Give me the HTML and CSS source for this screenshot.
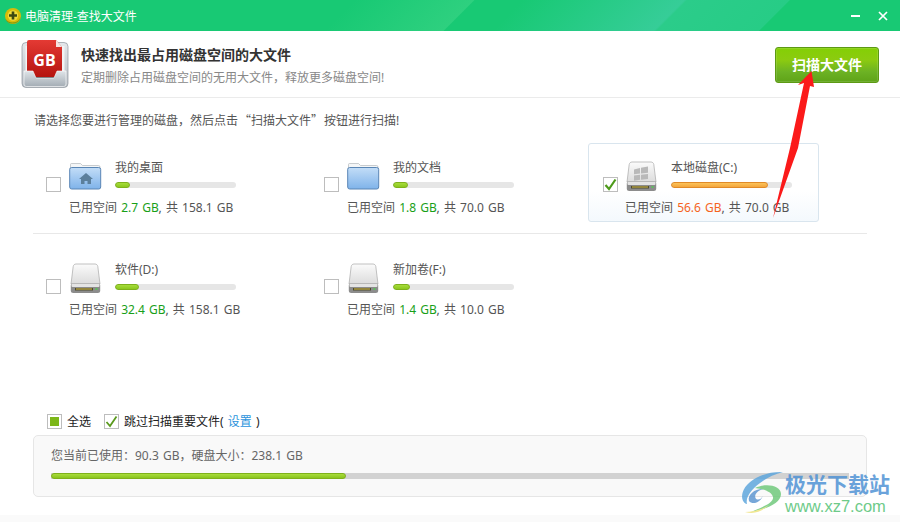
FILE: index.html
```html
<!DOCTYPE html>
<html lang="zh-CN">
<head>
<meta charset="utf-8">
<title>电脑清理-查找大文件</title>
<link rel="stylesheet" href="styles.css">
</head>
<body>
<div class="window">
  <header class="titlebar">
    <svg class="app-logo" viewBox="0 0 18 18" width="18" height="18"><circle cx="9" cy="9" r="8" fill="#d9bb08"/><path d="M1.500 11.500c2.500 5 12.500 6 15-1.500-.5 8-13.500 9-15 1.500z" fill="#7a9a12"/><circle cx="9" cy="8.500" r="5.200" fill="#f0dc3a"/><path d="M7.700 4.500h2.600v2.700H13v2.600h-2.700v2.700H7.700V9.800H5V7.200h2.700z" fill="#3d4a12"/></svg>
    <span class="title-text">电脑清理-查找大文件</span>
    <span class="win-controls">
      <svg width="10" height="10" viewBox="0 0 10 10"><rect x="0" y="4" width="9" height="2" fill="#fff"/></svg>
      <svg width="10" height="10" viewBox="0 0 10 10"><path d="M1 1l8 8M9 1L1 9" stroke="#fff" stroke-width="1.700"/></svg>
    </span>
  </header>

  <section class="head">
    <svg class="gb-icon" width="48" height="48" viewBox="0 0 48 48">
      <defs>
        <linearGradient id="tray" x1="0" y1="0" x2="0" y2="1"><stop offset="0" stop-color="#e4e7ea"/><stop offset="1" stop-color="#b5bcc3"/></linearGradient>
        <linearGradient id="front" x1="0" y1="0" x2="0" y2="1"><stop offset="0" stop-color="#dfe4e8"/><stop offset="1" stop-color="#a4adb5"/></linearGradient>
        <linearGradient id="red" x1="0" y1="0" x2="0" y2="1"><stop offset="0" stop-color="#e43a34"/><stop offset="1" stop-color="#b5140f"/></linearGradient>
      </defs>
      <rect x="1" y="2.500" width="46" height="45" rx="4" fill="url(#tray)" stroke="#8f969d" stroke-width=".7"/>
      <rect x="4.500" y="6" width="39" height="27" fill="#f1f3f4"/>
      <rect x="11" y="30" width="26" height="9" fill="#4a4f54"/>
      <path d="M8 0h27l6 7v30H6V2a2 2 0 0 1 2-2z" fill="url(#red)"/>
      <path d="M35 0v7h6z" fill="#f5e4e2"/>
      <text x="23.500" y="26" class="gb-text" text-anchor="middle">GB</text>
      <path d="M3 31h9l3 7h18l3-7h9v13a2.500 2.500 0 0 1-2.500 2.500h-37A2.500 2.500 0 0 1 3 44z" fill="url(#front)" stroke="#fff" stroke-width=".6"/>
    </svg>
    <div class="head-text">
      <h1>快速找出最占用磁盘空间的大文件</h1>
      <p>定期删除占用磁盘空间的无用大文件，释放更多磁盘空间!</p>
    </div>
    <button class="scan-btn">扫描大文件</button>
  </section>

  <main class="content">
    <p class="hint">请选择您要进行管理的磁盘，然后点击<span class="cjk">“扫描大文件”</span>按钮进行扫描!</p>

    <div class="row row-first">
      <div class="disk">
        <span class="check"></span>
        <svg class="disk-icon" width="34" height="34" viewBox="0 0 34 34"><use href="#folder"/><path d="M17 12l-7 6h2v5h3.500v-3h3v3H22v-5h2z" fill="#5b7f9c"/></svg>
        <div class="disk-body">
          <div class="disk-name">我的桌面</div>
          <div class="track"><div class="fill" style="width:12%"></div></div>
          <div class="usage">已用空间 <b class="ok">2.7 GB</b>, 共 158.1 GB</div>
        </div>
      </div>
      <div class="disk">
        <span class="check"></span>
        <svg class="disk-icon" width="34" height="34" viewBox="0 0 34 34"><use href="#folder"/></svg>
        <div class="disk-body">
          <div class="disk-name">我的文档</div>
          <div class="track"><div class="fill" style="width:12%"></div></div>
          <div class="usage">已用空间 <b class="ok">1.8 GB</b>, 共 70.0 GB</div>
        </div>
      </div>
      <div class="disk selected">
        <span class="check"><svg width="13" height="13" viewBox="0 0 13 13"><path d="M1.500 7l3.500 4L11.500 1.500" fill="none" stroke="#4d9a1a" stroke-width="2.200"/></svg></span>
        <svg class="disk-icon" width="34" height="34" viewBox="0 0 34 34"><use href="#drive"/><path d="M9 8.500l6-1.500v5.500l-6 .8zM16 6.800l7-1.300v6.200l-7 .8zM9 14.500l6-.7v5l-6 1zM16 13.700l7-.8v5l-7 .9z" fill="#b9b9b9"/></svg>
        <div class="disk-body">
          <div class="disk-name">本地磁盘(C:)</div>
          <div class="track"><div class="fill warn" style="width:80%"></div></div>
          <div class="usage">已用空间 <b class="hot">56.6 GB</b>, 共 70.0 GB</div>
        </div>
      </div>
    </div>

    <div class="row row-second">
      <div class="disk">
        <span class="check"></span>
        <svg class="disk-icon" width="34" height="34" viewBox="0 0 34 34"><use href="#drive"/></svg>
        <div class="disk-body">
          <div class="disk-name">软件(D:)</div>
          <div class="track"><div class="fill" style="width:20%"></div></div>
          <div class="usage">已用空间 <b class="ok">32.4 GB</b>, 共 158.1 GB</div>
        </div>
      </div>
      <div class="disk">
        <span class="check"></span>
        <svg class="disk-icon" width="34" height="34" viewBox="0 0 34 34"><use href="#drive"/></svg>
        <div class="disk-body">
          <div class="disk-name">新加卷(F:)</div>
          <div class="track"><div class="fill" style="width:14%"></div></div>
          <div class="usage">已用空间 <b class="ok">1.4 GB</b>, 共 10.0 GB</div>
        </div>
      </div>
    </div>

    <div class="options">
      <label class="opt"><span class="check small-check"><i class="square"></i></span>全选</label>
      <label class="opt"><span class="check small-check"><svg width="13" height="13" viewBox="0 0 13 13"><path d="M1.500 7l3.500 4L11.500 1.500" fill="none" stroke="#5a9a1e" stroke-width="1.800"/></svg></span>跳过扫描重要文件( <a class="link">设置</a> )</label>
    </div>

    <div class="summary">
      <div class="summary-text">您当前已使用：90.3 GB，硬盘大小：238.1 GB</div>
      <div class="summary-track"><div class="summary-fill"></div></div>
    </div>
  </main>
  <div class="foot"></div>

  <svg class="arrow" width="50" height="150" viewBox="0 0 50 150"><path d="M42.500 1L45 17l-4-1-12 62L4 148l17-70L35 13l-6 2z" fill="#fb1a1a"/></svg>

  <div class="watermark">
    <svg width="44" height="44" viewBox="0 0 44 44">
      <path d="M42 1C24 0 5 9 1.500 22c-1.500 6 1 10 4.500 11C3 22 22 6 42 1z" fill="#5aa4dc"/>
      <path d="M8 30c-2-7 7-13 15-12-6 1-10 5-8.500 9 1.500 3 6 1.500 7-2-.5 5-9.500 10-13.500 5z" fill="#5a94d0"/>
      <path d="M14 17c10-5 26-3 26 6 0 9-14 15-30 18 11-5 23-9 22-15-1-5-9-8-18-9z" fill="#6cc878"/>
      <path d="M4 41c8 0 16-2 24-7-6 5-13 10-24 7z" fill="#efe27a"/>
    </svg>
    <div class="wm-text">
      <div class="wm-cn">极光下载站</div>
      <div class="wm-url">www.xz7.com</div>
    </div>
  </div>

  <svg class="defs" width="0" height="0">
    <defs>
      <linearGradient id="fold" x1="0" y1="0" x2="0" y2="1"><stop offset="0" stop-color="#c3ddf7"/><stop offset="1" stop-color="#7fb3ea"/></linearGradient>
      <linearGradient id="drv" x1="0" y1="0" x2="0" y2="1"><stop offset="0" stop-color="#fbfbfb"/><stop offset="1" stop-color="#dcdcdc"/></linearGradient>
      <g id="folder">
        <path d="M1.500 6V3.500a1 1 0 0 1 1-1h9l2 2h16a1.500 1.500 0 0 1 1.500 1.500v3h-30z" fill="#f4f6f7" stroke="#b3b8bc" stroke-width=".7"/>
        <rect x=".7" y="6.500" width="31" height="21.500" rx="2" fill="url(#fold)" stroke="#5a86b5"/>
      </g>
      <g id="drive">
        <path d="M7 1h19c1.500 0 2.500 1 2.800 2.500L31 21H2L4.200 3.500C4.500 2 5.500 1 7 1z" fill="url(#drv)" stroke="#a8a8a8" stroke-width=".7"/>
        <rect x="1.800" y="20" width="29.400" height="10" rx="2.500" fill="#8c8c8c"/>
        <rect x="2.500" y="20.500" width="28" height="3.500" rx="1" fill="#e4e4e4"/>
        <rect x="6" y="25" width="18" height="2.500" fill="#4d4a2e"/>
        <rect x="7" y="25.500" width="16" height="1" fill="#d9c04a"/>
        <rect x="26.500" y="25" width="2" height="2" fill="#5bc05b"/>
      </g>
    </defs>
  </svg>
</div>
</body>
</html>
```
FILE: styles.css
```css
* { box-sizing: border-box; }
html, body { margin: 0; padding: 0; }
body { width: 900px; height: 522px; overflow: hidden; font-family: "Noto Sans", "Noto Sans CJK SC", sans-serif; font-size: 12px; color: #555; }
.window { position: relative; width: 900px; height: 522px; background: #fff; display: flex; flex-direction: column; }
.defs { position: absolute; }

.titlebar { height: 31px; flex: none; display: flex; align-items: center; padding: 0 12px 0 4px; color: #fff; font-size: 12px;
  background: linear-gradient(135deg, #18c974 251px, #2ed07f 335px, #18c974 336px, #18c974 370px, #36cd98 484px, #2bcc8a 486px, #27cc86 558px, #18c974 559px); }
.app-logo { margin-right: 3px; }
.win-controls { margin-left: auto; display: flex; gap: 17px; align-items: center; }

.head { height: 67px; flex: none; display: flex; align-items: center; padding: 0 21px 1px 21px; border-bottom: 1px solid #ebebeb; }
.gb-icon { margin-right: 12px; margin-top: 1px; }
.gb-text { font: bold 16px "Open Sans", sans-serif; fill: #fff; }
.head-text { display: flex; flex-direction: column; gap: 4px; margin-top: 4px; }
.head-text h1 { margin: 0; font-size: 14px; line-height: 20px; font-weight: 700; color: #333; }
.head-text p { margin: 0; font-size: 12px; line-height: 18px; color: #888; }
.scan-btn { margin-left: auto; margin-top: 2px; width: 104px; height: 36px; padding: 0 0 2px; border: 1px solid #5c9a13; border-radius: 3px; color: #fff; font: 700 14px "Noto Sans CJK SC", sans-serif;
  background: linear-gradient(180deg, #84cf05 0, #8ccb10 35%, #6cb224 70%, #5fa318 100%); box-shadow: inset 0 0 0 1px rgba(255,255,255,.12); }

.content { flex: 1; display: flex; flex-direction: column; padding: 0 33px; min-height: 0; }
.hint { margin: 13px 0 0 1px; line-height: 18px; color: #555; font-size: 12px; }
.cjk { font-family: "Noto Sans CJK SC", sans-serif; padding: 0 1px; }
.row { display: grid; grid-template-columns: 278px 279px 231px; height: 91px; align-items: start; }
.row-first { margin-top: 13px; border-bottom: 1px solid #e8e8e8; }
.row-second { margin-top: 11px; }
.disk { display: flex; align-items: flex-start; width: 231px; height: 79px; margin-left: -2px; padding: 15px 0 0 14px; border: 1px solid transparent; border-radius: 3px; }
.selected { border-color: #d9e5ee; background: linear-gradient(180deg, #fff 60%, #f4f9fd 100%); }
.selected .disk-icon { margin-left: 7px; }
.check { flex: none; display: inline-flex; align-items: center; justify-content: center; width: 15px; height: 15px; margin-top: 18px; border: 1px solid #bdbdbd; background: #fff; }
.disk-icon { flex: none; margin: 2px 0 0 8px; }
.disk-body { margin-left: 12px; width: 122px; }
.disk-name { line-height: 17px; color: #555; font-size: 12px; }
.track { margin-top: 6px; width: 121px; height: 6px; border-radius: 3px; background: #e6e6e6; overflow: hidden; }
.fill { height: 6px; border-radius: 3px; border: 1px solid #7eb11c; background: linear-gradient(180deg, #a6dc3b, #8cc81f); }
.fill.warn { border-color: #e08a28; background: linear-gradient(180deg, #fbc35a, #f5a63c); }
.usage { margin: 11px 0 0 -46px; white-space: nowrap; line-height: 18px; color: #555; word-spacing: 1px; }
.usage b { font-weight: 400; }
.ok { color: #18a018; }
.hot { color: #f5641e; }

.options { margin-top: auto; display: flex; gap: 13px; align-items: center; height: 20px; margin-left: 14px; color: #222; word-spacing: 1px; }
.opt { display: inline-flex; align-items: center; white-space: pre; }
.small-check { margin: 0 5px 0 0; }
.square { width: 9px; height: 9px; background: #7cb719; }
.link { color: #2b93dc; }
.summary { margin-top: 4px; height: 62px; width: 834px; border: 1px solid #e6e6e6; border-radius: 5px; background: #f9f9f9; padding: 11px 17px 0; margin-bottom: 18px; }
.summary-text { line-height: 18px; color: #666; word-spacing: 1px; }
.summary-track { margin: 8px 0 0; height: 6px; background: #d2d2d2; }
.summary-fill { width: 295px; height: 6px; border-radius: 3px; border: 1px solid #7fb11a; background: linear-gradient(180deg, #a8dc3a, #8ac41e); }
.foot { height: 7px; flex: none; background: #fafafa; }

.arrow { position: absolute; left: 769px; top: 70px; }
.watermark { position: absolute; left: 741px; top: 471px; display: flex; opacity: .82; }
.wm-text { margin-left: 0; }
.wm-cn { font: 700 21px/24px "Noto Sans CJK SC", sans-serif; color: #4a8fd4; white-space: nowrap; }
.wm-url { font: 400 16.500px/18px "Liberation Sans", sans-serif; color: #4fbf70; margin-top: 2px; white-space: nowrap; }
```
